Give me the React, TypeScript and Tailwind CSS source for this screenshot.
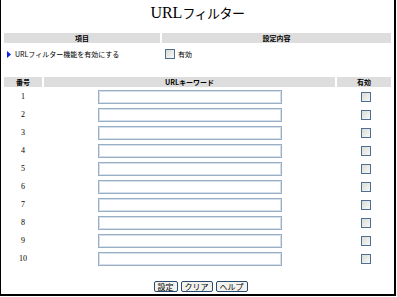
const rows = [1, 2, 3, 4, 5, 6, 7, 8, 9, 10]

function Check() {
  return (
    <span className="block w-[10px] h-[10px] border border-[#4d6f94] bg-gradient-to-br from-[#dcdcd6] to-[#f7f7f5]" />
  )
}

function Btn({ label }: { label: string }) {
  return (
    <button className="h-[11px] px-[3px] flex items-center border border-[#2b4a70] rounded-[2px] bg-[#f2f2ee] text-[8px] leading-none text-black">
      {label}
    </button>
  )
}

export default function App() {
  return (
    <div className="w-[396px] h-[296px] bg-white border-l border-r-2 border-b-2 border-black overflow-hidden text-black font-['Noto_Sans_CJK_JP',sans-serif]">
      <h1 className="h-[33px] pt-[3px] text-center leading-[17px] font-normal">
        <span className="font-['Liberation_Serif',serif] text-[16px]">URL</span>
        <span className="text-[13px] tracking-[-0.5px]">フィルター</span>
      </h1>

      <div className="ml-[3px] w-[387px]">
        <div className="flex gap-[2px] h-[10px] text-[7px] leading-[10px] font-bold">
          <div className="w-[156px] bg-[#dddddd] text-center">項目</div>
          <div className="flex-1 bg-[#dddddd] text-center">設定内容</div>
        </div>

        <div className="flex gap-[2px] h-[18px] mt-[2px] items-center text-[7px]">
          <div className="w-[156px] flex items-center gap-[4px] pl-[3px]">
            <svg width="4" height="7" viewBox="0 0 4 7">
              <path d="M0 0 L4 3.5 L0 7 Z" fill="#0a1ef0" />
            </svg>
            <span>URLフィルター機能を有効にする</span>
          </div>
          <div className="flex-1 flex items-center gap-[3px] pl-[3px]">
            <Check />
            <span>有効</span>
          </div>
        </div>

        <div className="flex gap-[2px] h-[10px] mt-[14px] text-[7px] leading-[10px] font-bold">
          <div className="w-[38px] bg-[#dddddd] text-center">番号</div>
          <div className="flex-1 bg-[#dddddd] text-center">URLキーワード</div>
          <div className="w-[54px] bg-[#dddddd] text-center">有効</div>
        </div>

        <div className="mt-[1px]">
          {rows.map((n) => (
            <div key={n} className="flex gap-[2px] h-[18px] items-center">
              <div className="w-[38px] text-center text-[8px] font-['Liberation_Serif',serif]">{n}</div>
              <div className="flex-1 flex justify-center">
                <div className="w-[184px] h-[14px] border border-[#98adc6] shadow-[inset_0_0_0_1px_#d6dfea] bg-white" />
              </div>
              <div className="w-[54px] flex justify-center pl-[3px]">
                <Check />
              </div>
            </div>
          ))}
        </div>

        <div className="flex justify-center gap-[3px] mt-[13px] pl-[6px]">
          <Btn label="設定" />
          <Btn label="クリア" />
          <Btn label="ヘルプ" />
        </div>
      </div>
    </div>
  )
}
